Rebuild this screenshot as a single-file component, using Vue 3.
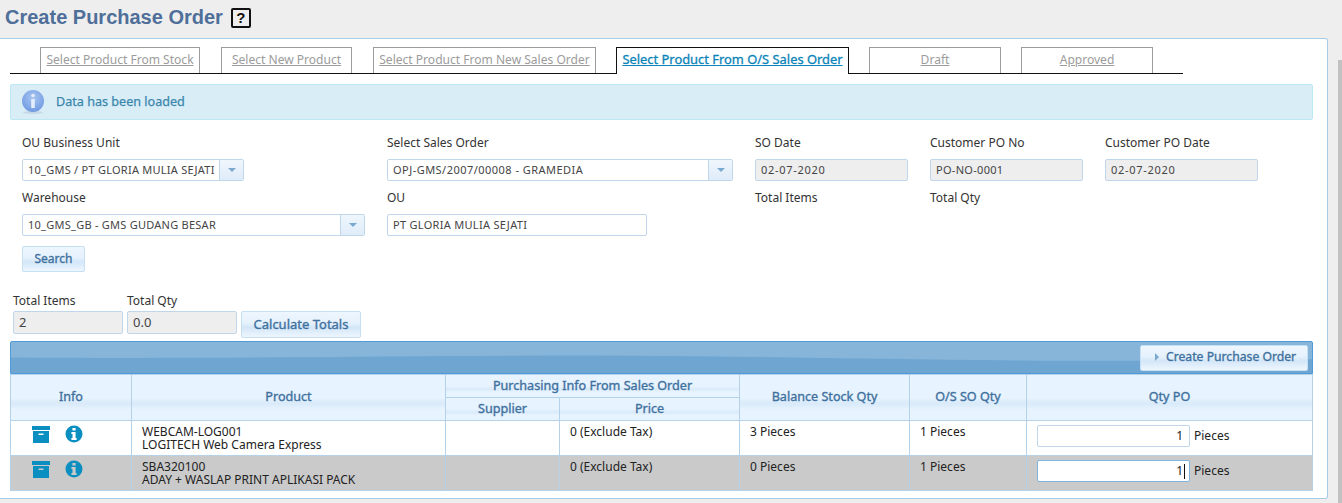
<script setup>
const tabs = [
  { label: 'Select Product From Stock', w: 160, gap: 21 },
  { label: 'Select New Product', w: 131, gap: 21 },
  { label: 'Select Product From New Sales Order', w: 223, gap: 20 },
  { label: 'Select Product From O/S Sales Order', w: 233, gap: 20, active: true },
  { label: 'Draft', w: 132, gap: 20 },
  { label: 'Approved', w: 132, gap: 0 },
]
const rows = [
  { code: 'WEBCAM-LOG001', name: 'LOGITECH Web Camera Express', stock: '3 Pieces', sel: false },
  { code: 'SBA320100', name: 'ADAY + WASLAP PRINT APLIKASI PACK', stock: '0 Pieces', sel: true },
]
</script>

<template>
  <div class="page">
    <header class="head">
      <h1>Create Purchase Order</h1>
      <span class="help">?</span>
    </header>
    <div class="scroll"></div>
    <main class="panel">
      <nav class="tabs">
        <a v-for="t in tabs" :key="t.label" class="tab" :class="{ active: t.active }"
           :style="{ width: t.w + 'px', marginRight: t.gap + 'px' }"><u>{{ t.label }}</u></a>
      </nav>

      <div class="alert">
        <svg class="ai" width="24" height="26" viewBox="0 0 24 26">
          <defs>
            <radialGradient id="ig" cx="50%" cy="35%" r="70%">
              <stop offset="0" stop-color="#a9c6f2" /><stop offset="1" stop-color="#6c97e0" />
            </radialGradient>
          </defs>
          <ellipse cx="12" cy="23.5" rx="10" ry="1.5" fill="#c5d8e4" />
          <circle cx="12" cy="12" r="11" fill="url(#ig)" />
          <circle cx="12" cy="6.5" r="1.8" fill="#e4edfb" />
          <rect x="10.2" y="10" width="3.6" height="9" fill="#e4edfb" />
        </svg>
        <span class="amsg">Data has been loaded</span>
      </div>

      <section class="form">
        <label>OU Business Unit</label>
        <label>Select Sales Order</label>
        <label>SO Date</label>
        <label>Customer PO No</label>
        <label>Customer PO Date</label>

        <div class="combo w222"><span class="val">10_GMS / PT GLORIA MULIA SEJATI</span><span class="arrow"><i></i></span></div>
        <div class="combo w346"><span class="val wide">OPJ-GMS/2007/00008 - GRAMEDIA</span><span class="arrow"><i></i></span></div>
        <div class="input ro wider">02-07-2020</div>
        <div class="input ro">PO-NO-0001</div>
        <div class="input ro wider">02-07-2020</div>

        <label>Warehouse</label>
        <label>OU</label>
        <label>Total Items</label>
        <label>Total Qty</label>
        <span></span>

        <div class="combo w343"><span class="val">10_GMS_GB - GMS GUDANG BESAR</span><span class="arrow"><i></i></span></div>
        <div class="input ou">PT GLORIA MULIA SEJATI</div>
        <span></span><span></span><span></span>

        <button class="btn search">Search</button>
      </section>

      <section class="totals">
        <div class="tf"><label>Total Items</label><div class="input ro">2</div></div>
        <div class="tf"><label>Total Qty</label><div class="input ro">0.0</div></div>
        <button class="btn calc">Calculate Totals</button>
      </section>

      <section class="grid">
        <div class="bar">
          <svg class="wave" viewBox="0 0 1303 34" preserveAspectRatio="none">
            <path fill="#6ea6d1" d="M0 17C250 19 420 14 620 15S1000 24 1303 19V34H0z" />
          </svg>
          <button class="btn create"><i class="tri"></i>Create Purchase Order</button>
        </div>
        <table>
          <colgroup>
            <col style="width:121px" /><col style="width:314px" /><col style="width:114px" />
            <col style="width:180px" /><col style="width:170px" /><col style="width:117px" /><col />
          </colgroup>
          <thead>
            <tr>
              <th rowspan="2">Info</th>
              <th rowspan="2">Product</th>
              <th colspan="2" class="sub">Purchasing Info From Sales Order</th>
              <th rowspan="2">Balance Stock Qty</th>
              <th rowspan="2">O/S SO Qty</th>
              <th rowspan="2">Qty PO</th>
            </tr>
            <tr>
              <th class="sub">Supplier</th>
              <th class="sub">Price</th>
            </tr>
          </thead>
          <tbody>
            <tr v-for="r in rows" :key="r.code" :class="{ sel: r.sel }">
              <td class="icons">
                <svg class="box" width="18" height="17" viewBox="0 0 18 17">
                  <path fill="#0a8fc0" fill-rule="evenodd" d="M0 0h18v4H0zM1 5h16v12H1zM6.500 7.500v1.500h5V7.500z" />
                </svg>
                <svg width="18" height="18" viewBox="0 0 18 18">
                  <path fill="#0a8fc0" fill-rule="evenodd" d="M9 .5a8.500 8.500 0 1 0 0 17 8.500 8.500 0 0 0 0-17zM7.400 2.900h3.200v2.500H7.400zM6.400 7h4.200v6h1v2H6.400v-2h1.100V9H6.400z" />
                </svg>
              </td>
              <td class="prod">{{ r.code }}<br />{{ r.name }}</td>
              <td></td>
              <td class="top">0 (Exclude Tax)</td>
              <td class="top">{{ r.stock }}</td>
              <td class="top">1 Pieces</td>
              <td class="qty">
                <span class="qi" :class="{ focus: r.sel }">1<b v-if="r.sel" class="caret"></b></span>
                <span>Pieces</span>
              </td>
            </tr>
          </tbody>
        </table>
      </section>
    </main>
  </div>
</template>

<style>
html, body { margin: 0; background: #eeeeee; overflow: hidden; }
</style>

<style scoped>
.page {
  position: relative;
  width: 1342px;
  height: 503px;
  background: #eeeeee;
  font-family: "Noto Sans", sans-serif;
  font-size: 12px;
  color: #333;
  overflow: hidden;
}
.head { height: 38px; display: flex; align-items: center; padding: 0 0 3px 5px; box-sizing: border-box; gap: 8px; }
h1 { margin: 0; font: bold 20px "Liberation Sans", sans-serif; color: #4e6f99; }
.help {
  width: 16px; height: 16px; border: 2px solid #111; border-radius: 2px;
  font: bold 15px/16px "Liberation Sans", sans-serif; text-align: center; color: #111;
}
.scroll { position: absolute; left: 1338px; top: 60px; width: 4px; height: 443px; background: #c1c1c1; }
.panel {
  width: 1328px; height: 461px; box-sizing: border-box;
  background: #fff; border: 1px solid #a6cde8; border-left: 0; border-radius: 0 3px 3px 0;
  padding: 8px 0 0 10px;
}
.tabs { display: flex; width: 1173px; padding-left: 30px; box-sizing: border-box; border-bottom: 1px solid #111; height: 27px; }
.tab {
  height: 26px; box-sizing: border-box; border: 1px solid #9c9c9c; border-bottom: 0;
  color: #9c9c9c; text-align: center; line-height: 24px; white-space: nowrap; font-size: 12.05px;
}
.tab.active { height: 27px; border-color: #111; color: #0a84b8; background: #fff; position: relative; font-size: 12.9px; line-height: 23px; -webkit-text-stroke: 0.3px #0a84b8; }
.alert {
  width: 1303px; height: 36px; box-sizing: border-box; margin-top: 10px;
  background: #d9edf7; border: 1px solid #bce8f1; border-radius: 2px;
  display: flex; align-items: center; color: #3a87ad; -webkit-text-stroke: 0.25px #3a87ad;
  padding-left: 10px; gap: 11px; font-size: 12.6px;
}
.amsg { margin-bottom: 2px; }
.ai { flex: none; }
.form {
  display: grid;
  grid-template-columns: 365px 368px 175px 175px 208px;
  grid-template-rows: 24px 31px 24px 32px 26px;
  padding: 15px 0 0 12px;
  align-items: start;
}
.form label { line-height: 16px; height: 16px; }
.combo {
  display: flex; height: 22px; box-sizing: border-box; background: #fff;
  border: 1px solid #c0d6ea; border-radius: 2px; overflow: hidden;
}
.w222 { width: 222px; } .w346 { width: 346px; } .w343 { width: 343px; }
.val { flex: 1; padding-left: 5px; line-height: 20px; font-size: 11px; letter-spacing: 0.25px; white-space: nowrap; color: #444; }
.val.wide { letter-spacing: 0.47px; }
.arrow { width: 23px; flex: none; border-left: 1px solid #c0d6ea; background: linear-gradient(#eff6fd, #dfecf9); display: flex; align-items: center; justify-content: center; }
.arrow i { width: 0; height: 0; border: 4px solid transparent; border-top: 4px solid #7aa9d0; border-bottom: 0; }
.input {
  height: 22px; box-sizing: border-box; border: 1px solid #c0d6ea; border-radius: 2px;
  padding-left: 5px; line-height: 20px; font-size: 11px; letter-spacing: 0.3px; background: #fff; color: #444;
}
.input.wider { letter-spacing: 0.7px; }
.ro { background: #eeeeee; width: 153px; }
.ou { width: 260px; }
.btn {
  font-family: "Noto Sans", sans-serif; font-weight: 400; color: #3f719e; -webkit-text-stroke: 0.35px #3f719e;
  border: 1px solid #c5dff3; border-radius: 2px; padding: 0 0 2px;
  background: linear-gradient(#eef6fe 0%, #e5f1fc 45%, #d3e6f8 62%, #eef6fe 100%);
}
.search { width: 63px; height: 26px; font-size: 12px; grid-column: 1; }
.totals { display: flex; align-items: flex-end; margin: 20px 0 0 3px; height: 46px; }
.tf { width: 114px; }
.tf label { display: block; height: 19px; line-height: 18px; }
.tf .ro { width: 110px; height: 23px; background: #eeeeee; font-size: 13px; letter-spacing: 0; line-height: 20px; margin-bottom: 4px; }
.calc { width: 120px; height: 27px; font-size: 13px; }
.grid { width: 1303px; margin-top: 3px; }
.bar {
  position: relative;
  height: 33px; box-sizing: border-box; border: 1px solid #4f9ad8; border-radius: 2px 2px 0 0;
  background: #87b5da;
  display: flex; justify-content: flex-end; align-items: center; padding-right: 4px;
}
.wave { position: absolute; inset: 0; width: 100%; height: 100%; }
.create { position: relative; width: 168px; height: 26px; font-size: 12.2px; display: flex; align-items: center; justify-content: flex-start; gap: 7px; padding-left: 14px; }
.tri { width: 0; height: 0; border: 4px solid transparent; border-left: 4px solid #7aa9d0; border-right: 0; }
table { width: 1303px; table-layout: fixed; border-collapse: collapse; }
th, td { border: 1px solid #b4d2ea; padding: 0; }
th {
  color: #3f719e; font-weight: 400; -webkit-text-stroke: 0.35px #3f719e; font-size: 12.6px; text-align: center;
  padding-bottom: 2px;
  background: linear-gradient(#e7f3fe 0%, #e7f3fe 50%, #d8e9f9 62%, #e7f3fe 75%, #e7f3fe 100%);
}
thead tr { height: 22px; }
th.sub { height: 20px; }
tbody tr { height: 35px; background: #fff; color: #222; }
tbody tr.sel { background: #cacaca; }
td { vertical-align: top; line-height: 13px; }
.icons { padding: 4px 0 0 21px; white-space: nowrap; }
.icons svg { vertical-align: top; }
.icons .box { margin-top: 1px; }
.icons svg + svg { margin-left: 15px; }
.prod { padding: 4px 0 0 10px; }
.top { padding: 4px 0 0 10px; }
.qty { padding: 4px 0 0 10px; white-space: nowrap; }
.qi {
  display: inline-block; width: 153px; height: 22px; box-sizing: border-box; background: #fff;
  border: 1px solid #c0d6ea; border-radius: 2px; text-align: right; padding-right: 6px; line-height: 20px;
  vertical-align: top; margin-right: 4px; position: relative;
}
.qi + span { line-height: 22px; }
.qi.focus { border-color: #7eb4e0; }
.caret { position: absolute; right: 4px; top: 3px; width: 1px; height: 15px; background: #111; }
</style>
